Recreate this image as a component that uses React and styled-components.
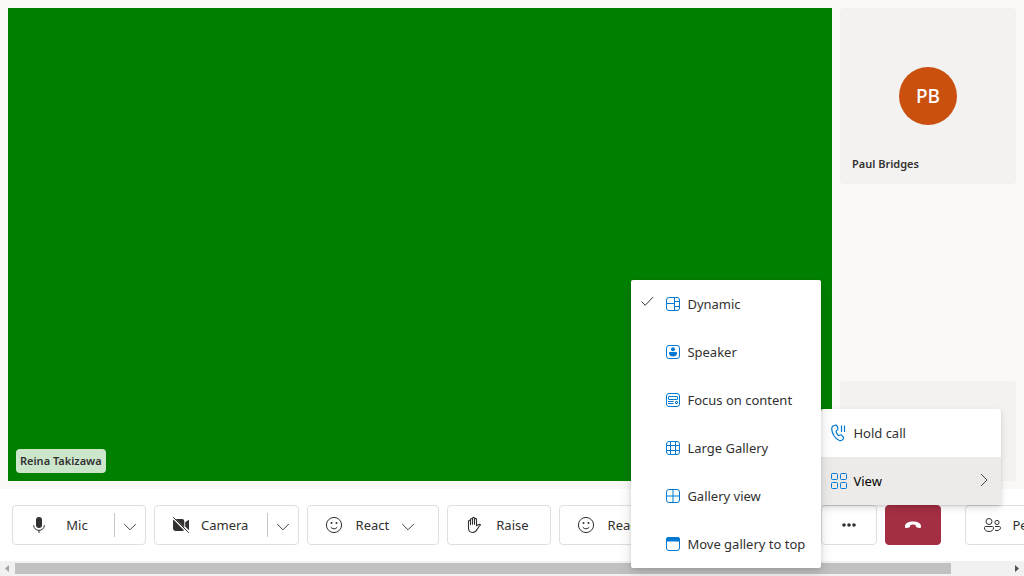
import React from "react";
import styled, { createGlobalStyle, css } from "styled-components";

const GlobalStyle = createGlobalStyle`
  *, *::before, *::after { box-sizing: border-box; }
  body {
    margin: 0;
    background: #ffffff;
    color: #323130;
    font-family: "Noto Sans", "Open Sans", sans-serif;
    font-size: 13px;
    line-height: 20px;
  }
  button { font: inherit; color: inherit; }
`;

const Page = styled.div`
  display: flex;
  flex-direction: column;
  min-height: 100vh;
  overflow: hidden;
`;

const Stage = styled.main`
  flex: 1;
  display: grid;
  grid-template-columns: minmax(0, 1fr) 176px;
  gap: 8px;
  padding: 8px;
  background: #faf9f8;
`;

const Video = styled.section`
  display: flex;
  align-items: flex-end;
  padding: 8px;
  background: #008000;
`;

const NameTag = styled.span`
  padding: 2px 4px;
  border-radius: 4px;
  background: rgba(255, 255, 255, 0.8);
  font-size: 11px;
  font-weight: 600;
`;

const Sidebar = styled.aside`
  display: flex;
  flex-direction: column;
  justify-content: space-between;
`;

const Tile = styled.section`
  display: grid;
  grid-template-rows: 1fr auto 1fr;
  justify-items: center;
  height: ${(p) => p.$height};
  padding: 8px 12px;
  border-radius: 4px;
  background: #f3f2f1;
`;

const Avatar = styled.div`
  grid-row: 2;
  display: grid;
  place-items: center;
  width: 58px;
  height: 58px;
  border-radius: 50%;
  background: #ca5010;
  color: #ffffff;
  font-size: 19px;
  font-weight: 500;
`;

const TileName = styled.span`
  grid-row: 3;
  align-self: end;
  justify-self: start;
  padding: 2px 0;
  font-size: 11px;
  font-weight: 600;
`;

const ControlBar = styled.footer`
  display: flex;
  gap: 8px;
  padding: 16px 12px;
  background: #ffffff;
`;

const frame = css`
  flex: none;
  display: flex;
  align-items: center;
  height: 40px;
  border: 1px solid #e1dfdd;
  border-radius: 4px;
  background: #ffffff;
`;

const SplitFrame = styled.div`
  ${frame}
`;

const SplitMain = styled.button`
  display: flex;
  align-items: center;
  gap: 10px;
  height: 38px;
  padding: 0 19px 0 16px;
  border: 0;
  background: none;
`;

const SplitArrow = styled.button`
  display: grid;
  place-items: center;
  width: 31px;
  height: 24px;
  padding: 0;
  border: 0;
  border-left: 1px solid #c8c6c4;
  background: none;
`;

const BarButton = styled.button`
  ${frame}
  gap: 10px;
  min-width: ${(p) => p.$width || "104px"};
  padding: 0 16px;
`;

const IconButton = styled.button`
  ${frame}
  justify-content: center;
  width: 56px;
  padding: 0;
`;

const HangUp = styled(IconButton)`
  margin-right: 16px;
  border-color: #a42e43;
  background: #a42e43;
  color: #ffffff;
`;

const Label = styled.span`
  min-width: ${(p) => p.$width || "36px"};
  text-align: center;
`;

const Icon = styled.svg.attrs((p) => ({
  viewBox: p.viewBox || "0 0 20 20",
  width: p.width || 20,
  height: p.height || 20,
  fill: p.fill || "none",
  stroke: p.stroke || "currentColor",
  "aria-hidden": true,
}))`
  display: block;
  flex: none;
`;

const MenuAnchor = styled.div`
  position: relative;
  flex: none;
`;

const menuSurface = css`
  margin: 0;
  padding: 0;
  list-style: none;
  border-radius: 2px;
  background: #ffffff;
  box-shadow: 0 3px 7px rgba(0, 0, 0, 0.13), 0 1px 2px rgba(0, 0, 0, 0.11);
`;

const Menu = styled.ul`
  ${menuSurface}
  position: absolute;
  left: 0;
  bottom: 100%;
  width: 180px;
`;

const SubMenu = styled.ul`
  ${menuSurface}
  position: absolute;
  right: 100%;
  bottom: -63px;
  width: 190px;
  box-shadow: 0 6px 14px rgba(0, 0, 0, 0.13), 0 1px 4px rgba(0, 0, 0, 0.11);
`;

const MenuItem = styled.button`
  display: flex;
  align-items: center;
  gap: 4px;
  width: 100%;
  height: 48px;
  padding: 0 8px;
  border: 0;
  background: ${(p) => (p.$active ? "#edebe9" : "transparent")};
  color: ${(p) => (p.$active ? "#000000" : "#323130")};
  white-space: nowrap;
  text-align: left;

  > svg { color: #0078d4; }
`;

const ItemText = styled.span`
  flex: 1;
`;

const CheckSlot = styled.span`
  flex: none;
  width: 20px;
  height: 20px;
`;

const Arrow = styled.span`
  color: #484644;
`;

const Scrollbar = styled.div`
  display: flex;
  align-items: center;
  height: 15px;
  background: #f1f1f1;
`;

const ScrollTrack = styled.div`
  flex: 1;
  height: 11px;
`;

const ScrollThumb = styled.div`
  width: 94.2%;
  height: 11px;
  background: #c1c1c1;
`;

const ScrollArrow = styled.svg.attrs({
  viewBox: "0 0 15 15",
  width: 15,
  height: 15,
  "aria-hidden": true,
})`
  display: block;
  flex: none;
`;

const ChevronDown = () => (
  <Icon viewBox="0 0 16 16" width={16} height={16} stroke="#484644">
    <path d="M2.200 7 8 12.800 13.800 7" />
  </Icon>
);

const MicIcon = () => (
  <Icon>
    <rect x="7" y="2" width="6" height="11" rx="3" fill="currentColor" stroke="none" />
    <path d="M4.7 10v.6A5 5 0 0 0 10 15.3a5 5 0 0 0 5.3-4.7V10M10 15.3V18" />
  </Icon>
);

const CameraOffIcon = () => (
  <Icon>
    <path d="M4.6 4H11a2.3 2.3 0 0 1 2.3 2.3v6.2zM2.4 4.6 13 15.2a2.4 2.4 0 0 1-2 .8H4.4A2.4 2.4 0 0 1 2 13.6V5.8zM14.2 7.3 17 5.2c.5-.4 1-.1 1 .4v8.8c0 .3-.2.5-.4.5l-3.4-3.3z" fill="currentColor" stroke="none" />
    <path d="m2.2 2.2 15.6 15.6" />
  </Icon>
);

const SmileIcon = () => (
  <Icon>
    <circle cx="10" cy="10" r="7.6" />
    <path d="M6.8 12.2a4 4 0 0 0 6.4 0" />
    <circle cx="7.5" cy="8" r="1" fill="currentColor" stroke="none" />
    <circle cx="12.5" cy="8" r="1" fill="currentColor" stroke="none" />
  </Icon>
);

const HandIcon = () => (
  <Icon strokeLinecap="round" strokeLinejoin="round" strokeWidth="1.1">
    <path d="M6.500 9.500V4.500a1 1 0 0 1 2 0V3.400a1 1 0 0 1 2 0v1a1 1 0 0 1 2 0v6.400l1.900-1.100c.8-.4 1.500-.4 2.200.2-1.500 1-2.400 2.700-3.200 4.200-1 2-2.200 3.400-4.800 3.400-2.800 0-4.100-1.800-4.100-4.600V6.300a1 1 0 0 1 2 0M8.500 4.500v4.800M10.500 4.400v4.900" />
  </Icon>
);

const PeopleIcon = () => (
  <Icon>
    <circle cx="7" cy="6.5" r="3" />
    <circle cx="15" cy="7.5" r="2.1" />
    <path d="M3.6 11.5h6.8c.7 0 1.2.5 1.2 1.2 0 2.400-1.800 3.800-4.600 3.800s-4.600-1.400-4.600-3.800c0-.7.5-1.200 1.200-1.200zM13 11.500h4.300c.7 0 1.200.5 1.200 1.100 0 2-1.600 3-3.500 3-.7 0-1.400-.1-2-.4" />
  </Icon>
);

const MoreIcon = () => (
  <Icon fill="currentColor" stroke="none">
    <circle cx="5" cy="10" r="1.800" /><circle cx="10" cy="10" r="1.800" /><circle cx="15" cy="10" r="1.800" />
  </Icon>
);

const HangUpIcon = () => (
  <Icon stroke="none">
    <path d="M10 6.500c4.800 0 8 2.100 8 4.700v.6c0 .9-.7 1.400-1.500 1.200l-2.500-.5c-.7-.1-1.100-.6-1.200-1.300l-.2-1.300a8 8 0 0 0-5.200 0L7.200 11.200c-.1.700-.5 1.200-1.200 1.300l-2.500.5C2.700 13.200 2 12.700 2 11.800v-.6C2 8.600 5.200 6.500 10 6.500z" fill="currentColor" />
  </Icon>
);

const HoldIcon = () => (
  <Icon strokeLinejoin="round" strokeWidth="1.200">
    <path d="m5.200 2.500 1-.3c.8-.2 1.600.2 1.900 1l.7 1.800c.3.700.1 1.400-.4 1.900L7 8.200c.3 1.800 1.100 3.200 2.500 4.400l1.800-.6c.7-.2 1.400 0 1.800.6l1.100 1.500c.5.700.4 1.600-.2 2.200l-.7.6c-.8.7-1.900 1-2.900.6-4.200-1.400-7.300-6.700-7.700-11.400-.1-1.600.8-3.100 2.500-3.600zM12.500 2.500V9M15.500 2.500V9" />
  </Icon>
);

const ViewIcon = () => (
  <Icon>
    <rect x="2.500" y="2.500" width="6" height="6" rx="1" /><rect x="11.500" y="2.500" width="6" height="6" rx="1" />
    <rect x="2.500" y="11.500" width="6" height="6" rx="1" /><rect x="11.500" y="11.500" width="6" height="6" rx="1" />
  </Icon>
);

const Box = () => <rect x="3.500" y="3.500" width="13" height="13" rx="2.500" />;

const DynamicIcon = () => (
  <Icon><Box /><path d="M11.500 3.500v13M3.500 9.500h8M11.500 7.500h5M11.500 12.500h5" /></Icon>
);

const SpeakerIcon = () => (
  <Icon>
    <Box />
    <circle cx="10" cy="7.200" r="2" fill="currentColor" stroke="none" />
    <path d="M7.200 10h5.600c.7 0 1.200.5 1.200 1.200 0 2-1.700 3.300-4 3.300s-4-1.300-4-3.300c0-.7.5-1.200 1.200-1.200z" fill="currentColor" stroke="none" />
  </Icon>
);

const FocusIcon = () => (
  <Icon>
    <Box />
    <rect x="5.500" y="6.500" width="9" height="3" rx=".5" />
    <path d="M5 11.500h5.500M5 13.500h5.500" />
    <rect x="12.500" y="11.500" width="2" height="2" rx=".5" />
  </Icon>
);

const LargeGalleryIcon = () => (
  <Icon><Box /><path d="M7.500 3.500v13M12.500 3.500v13M3.500 7.500h13M3.500 12.500h13" /></Icon>
);

const GalleryIcon = () => (
  <Icon><Box /><path d="M10 3.500v13M3.500 10h13" /></Icon>
);

const MoveTopIcon = () => (
  <Icon>
    <Box />
    <path d="M3 7.500V5.500A2.500 2.500 0 0 1 5.500 3h9A2.500 2.500 0 0 1 17 5.500v2z" fill="currentColor" stroke="none" />
  </Icon>
);

const views = [
  { name: "Dynamic", Glyph: DynamicIcon, checked: true },
  { name: "Speaker", Glyph: SpeakerIcon },
  { name: "Focus on content", Glyph: FocusIcon },
  { name: "Large Gallery", Glyph: LargeGalleryIcon },
  { name: "Gallery view", Glyph: GalleryIcon },
  { name: "Move gallery to top", Glyph: MoveTopIcon },
];

function SplitButton({ label, labelWidth, children }) {
  return (
    <SplitFrame>
      <SplitMain type="button">
        {children}
        <Label $width={labelWidth}>{label}</Label>
      </SplitMain>
      <SplitArrow type="button" aria-label={`${label} options`}>
        <ChevronDown />
      </SplitArrow>
    </SplitFrame>
  );
}

function ViewMenu() {
  return (
    <SubMenu role="menu">
      {views.map(({ name, Glyph, checked }) => (
        <li key={name} role="none">
          <MenuItem type="button" role="menuitemradio" aria-checked={!!checked}>
            <CheckSlot>
              {checked && <Icon stroke="#323130"><path d="m2.500 7.500 3.700 3.800 8-8.300" /></Icon>}
            </CheckSlot>
            <Glyph />
            <ItemText>{name}</ItemText>
          </MenuItem>
        </li>
      ))}
    </SubMenu>
  );
}

export default function App() {
  return (
    <Page>
      <GlobalStyle />
      <Stage>
        <Video><NameTag>Reina Takizawa</NameTag></Video>
        <Sidebar>
          <Tile $height="176px">
            <Avatar>PB</Avatar>
            <TileName>Paul Bridges</TileName>
          </Tile>
          <Tile $height="100px" />
        </Sidebar>
      </Stage>
      <ControlBar>
        <SplitButton label="Mic"><MicIcon /></SplitButton>
        <SplitButton label="Camera" labelWidth="47px"><CameraOffIcon /></SplitButton>
        <BarButton type="button" $width="132px">
          <SmileIcon /><Label>React</Label><ChevronDown />
        </BarButton>
        <BarButton type="button"><HandIcon /><Label>Raise</Label></BarButton>
        <BarButton type="button" $width="254px"><SmileIcon /><Label>React</Label></BarButton>
        <MenuAnchor>
          <IconButton type="button" aria-label="More"><MoreIcon /></IconButton>
          <Menu role="menu">
            <li role="none">
              <MenuItem type="button" role="menuitem"><HoldIcon /><ItemText>Hold call</ItemText></MenuItem>
            </li>
            <li role="none">
              <MenuItem type="button" role="menuitem" aria-haspopup="true" $active>
                <ViewIcon />
                <ItemText>View</ItemText>
                <Arrow>
                  <Icon viewBox="0 0 16 16" width={16} height={16}><path d="m4 1 6 6-6 6" /></Icon>
                </Arrow>
              </MenuItem>
              <ViewMenu />
            </li>
          </Menu>
        </MenuAnchor>
        <HangUp type="button" aria-label="Leave"><HangUpIcon /></HangUp>
        <BarButton type="button"><PeopleIcon /><Label>People</Label></BarButton>
      </ControlBar>
      <Scrollbar>
        <ScrollArrow><path d="M9 4v7L5 7.500z" fill="#a3a3a3" /></ScrollArrow>
        <ScrollTrack><ScrollThumb /></ScrollTrack>
        <ScrollArrow><path d="M6 4v7l4-3.500z" fill="#505050" /></ScrollArrow>
      </Scrollbar>
    </Page>
  );
}
